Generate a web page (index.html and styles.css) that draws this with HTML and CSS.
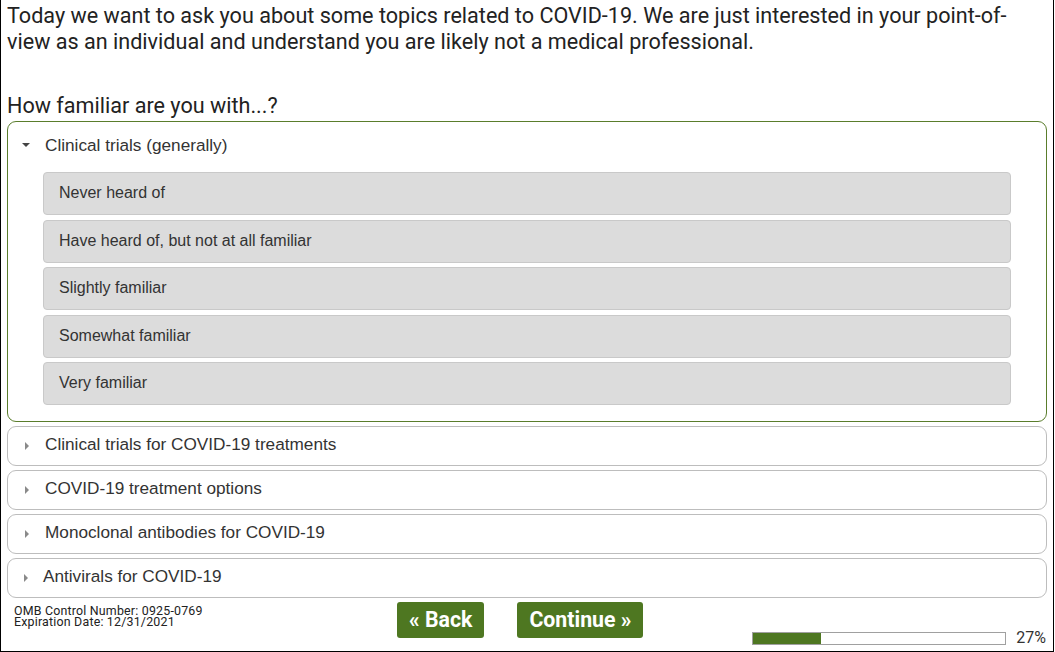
FILE: index.html
```html
<!DOCTYPE html>
<html lang="en">
<head>
<meta charset="utf-8">
<title>COVID-19 survey</title>
<link rel="stylesheet" href="styles.css">
</head>
<body>
<div class="page">
  <p class="intro">Today we want to ask you about some topics related to COVID-19. We are just interested in your point-of-view as an individual and understand you are likely not a medical professional.</p>
  <h2 class="question">How familiar are you with...?</h2>
  <div class="accordion">
    <section class="panel open">
      <div class="panel-head"><span class="caret caret-down"></span><span>Clinical trials (generally)</span></div>
      <div class="options">
        <div class="option">Never heard of</div>
        <div class="option">Have heard of, but not at all familiar</div>
        <div class="option">Slightly familiar</div>
        <div class="option">Somewhat familiar</div>
        <div class="option">Very familiar</div>
      </div>
    </section>
    <section class="panel">
      <div class="panel-head"><span class="caret caret-right"></span><span>Clinical trials for COVID-19 treatments</span></div>
    </section>
    <section class="panel">
      <div class="panel-head"><span class="caret caret-right"></span><span>COVID-19 treatment options</span></div>
    </section>
    <section class="panel">
      <div class="panel-head"><span class="caret caret-right"></span><span>Monoclonal antibodies for COVID-19</span></div>
    </section>
    <section class="panel">
      <div class="panel-head panel-head-tight"><span class="caret caret-right"></span><span>Antivirals for COVID-19</span></div>
    </section>
  </div>
  <footer class="footer">
    <div class="omb">
      <div class="omb-line">OMB Control Number: 0925-0769</div>
      <div class="omb-line">Expiration Date: 12/31/2021</div>
    </div>
    <div class="nav">
      <button class="btn" type="button">« Back</button>
      <button class="btn" type="button">Continue »</button>
    </div>
    <div class="progress">
      <div class="bar"><div class="fill" style="width:27%"></div></div>
      <span class="pct">27%</span>
    </div>
  </footer>
</div>
</body>
</html>
```

FILE: styles.css
```css
html, body {
  margin: 0;
  padding: 0;
  background: #fff;
}

.page {
  box-sizing: border-box;
  width: 1054px;
  height: 652px;
  border-left: 1px solid #000;
  border-right: 1px solid #000;
  border-bottom: 1px solid #000;
  padding: 0 6px;
  overflow: hidden;
}

.intro {
  margin: 0;
  padding-top: 3px;
  font-family: Roboto, "Liberation Sans", sans-serif;
  font-size: 21.6px;
  line-height: 26px;
  color: #222;
}

.question {
  margin: 38px 0 2px;
  font-family: Roboto, "Liberation Sans", sans-serif;
  font-size: 21.6px;
  line-height: 26px;
  font-weight: normal;
  color: #222;
}

.accordion {
  display: flex;
  flex-direction: column;
  gap: 4px;
}

.panel {
  border: 1px solid #bdbdbd;
  border-radius: 9px;
  background: #fff;
}

.panel.open {
  border-color: #5a7d2c;
}

.panel-head {
  display: flex;
  align-items: center;
  padding: 7px 0 11px 17px;
  font-family: "Liberation Sans", Arial, sans-serif;
  font-size: 17.2px;
  line-height: 20px;
  color: #333;
}

.panel-head-tight .caret-right {
  margin-left: -1px;
  margin-right: 15px;
}

.open .panel-head {
  padding: 13px 0 17px 14px;
}

.caret {
  display: inline-block;
  width: 0;
  height: 0;
  flex: none;
}

.caret-down {
  border-left: 4px solid transparent;
  border-right: 4px solid transparent;
  border-top: 4px solid #444;
  margin-right: 15px;
  margin-top: 0;
}

.caret-right {
  border-top: 4px solid transparent;
  border-bottom: 4px solid transparent;
  border-left: 4px solid #8a8a8a;
  margin-right: 16px;
  margin-top: 4px;
}

.options {
  display: flex;
  flex-direction: column;
  gap: 4.5px;
  padding: 0 35px 16px;
}

.option {
  border: 1px solid #c9c9c9;
  border-radius: 4px;
  background: #dcdcdc;
  padding: 10px 15px 11px;
  font-family: "Liberation Sans", Arial, sans-serif;
  font-size: 16px;
  line-height: 20px;
  color: #333;
}

.footer {
  display: flex;
  align-items: flex-start;
  margin-top: 4px;
}

.omb {
  box-sizing: border-box;
  width: 390px;
  padding: 3px 0 0 7px;
  font-family: Roboto, "Liberation Sans", sans-serif;
  font-size: 12.4px;
  letter-spacing: 0.2px;
  line-height: 11px;
  color: #222;
}

.omb-line {
  white-space: nowrap;
}

.nav {
  display: flex;
  gap: 33px;
}

.btn {
  height: 36px;
  padding: 0 12px;
  border: none;
  border-radius: 3px;
  background: #4e7721;
  color: #fff;
  font-family: Roboto, "Liberation Sans", sans-serif;
  font-size: 21.3px;
  font-weight: bold;
  line-height: 36px;
  cursor: pointer;
}

.progress {
  display: flex;
  align-items: center;
  margin-left: auto;
  margin-top: 28px;
}

.bar {
  box-sizing: border-box;
  width: 254px;
  height: 13px;
  border: 1px solid #a0a0a0;
  background: #fff;
}

.fill {
  height: 100%;
  background: #4e7721;
}

.pct {
  margin-left: 10px;
  margin-right: 1px;
  font-family: Roboto, "Liberation Sans", sans-serif;
  font-size: 16px;
  line-height: 16px;
  color: #333;
}
```
